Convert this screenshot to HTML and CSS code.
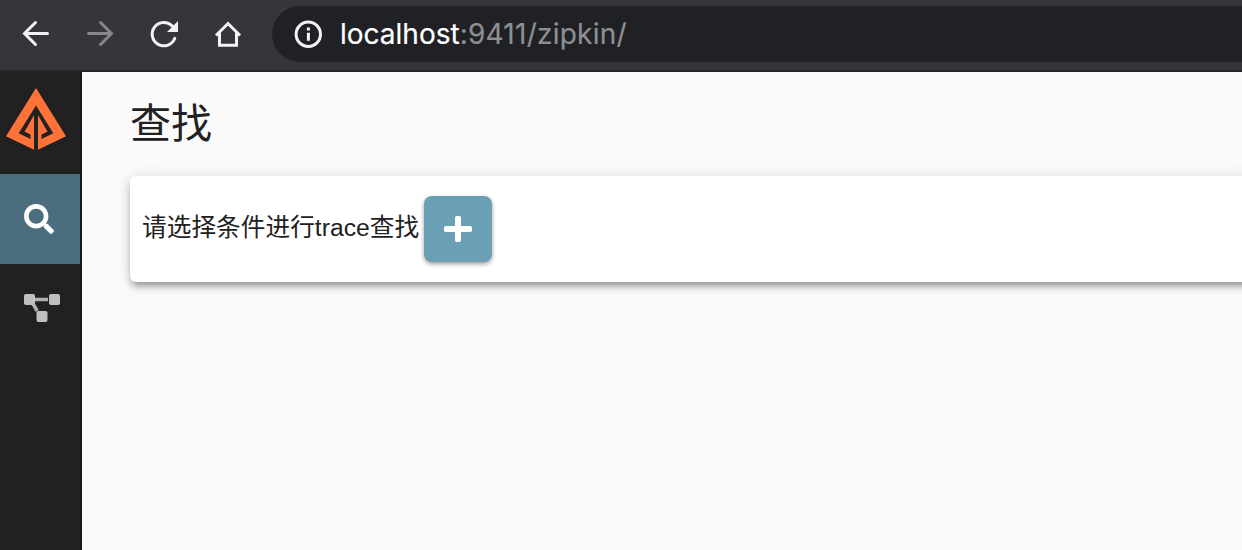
FILE: index.html
```html
<!DOCTYPE html>
<html lang="zh-CN">
<head>
<meta charset="utf-8">
<title>Zipkin</title>
<link rel="stylesheet" href="styles.css">
</head>
<body>
<header class="toolbar">
  <nav class="nav-icons">
    <svg width="32" height="32" viewBox="0 0 32 32" class="stroke"><path d="M27.500 15.500H4.500M15.500 4.500 4.500 15.500 15.500 26.500"/></svg>
    <svg width="32" height="32" viewBox="0 0 32 32" class="stroke dim"><path d="M4.500 15.500H27.500M16.500 4.500 27.500 15.500 16.500 26.500"/></svg>
    <svg width="32" height="32" viewBox="0 0 32 32" class="stroke"><path d="M26.800 20.300A11.700 11.700 0 1 1 24.200 7.900"/><path class="solid" d="M30 3V14H19Z"/></svg>
    <svg width="32" height="32" viewBox="0 0 32 32" class="stroke"><path class="miter" d="M4 17.500 16 5.500 28 17.500M7.500 14.500V27.300H24.500V14.500"/></svg>
  </nav>
  <div class="address">
    <svg width="28" height="28" viewBox="0 0 28 28" class="stroke info"><circle cx="14.300" cy="14.300" r="12.200"/><path class="solid" d="M12.900 7.500h3v3h-3zM12.900 12.700h3v8h-3z"/></svg>
    <div class="url"><span class="host">localhost</span><span class="path">:9411/zipkin/</span></div>
  </div>
</header>
<div class="app">
  <aside class="sidebar">
    <div class="logo">
      <svg width="60" height="62" viewBox="0 0 60 62"><path fill="#ff7238" fill-rule="evenodd" d="M30 0 60 48.300 32 61.800V27L41.500 43.700 35.500 46.500V51L47.300 45.200 30 17.500 12.700 45.200 24.500 51V46.500L18.500 43.700 28 27V61.800L0 48.300Z"/></svg>
    </div>
    <a class="item active">
      <svg width="30" height="30" viewBox="0 0 512 512"><path fill="#fff" d="M505 442.700 405.300 343c-4.500-4.500-10.600-7-17-7H372c27.600-35.300 44-79.700 44-128C416 93.100 322.900 0 208 0S0 93.100 0 208s93.100 208 208 208c48.300 0 92.700-16.400 128-44v16.300c0 6.400 2.500 12.500 7 17l99.700 99.700c9.400 9.400 24.600 9.400 33.900 0l28.300-28.300c9.400-9.400 9.400-24.600.1-34zM208 336c-70.700 0-128-57.200-128-128 0-70.700 57.200-128 128-128 70.700 0 128 57.200 128 128 0 70.700-57.200 128-128 128z"/></svg>
    </a>
    <a class="item deps">
      <svg width="36" height="28" viewBox="0 0 36 28"><path d="M10 5.500H24M8 8 13.200 17" stroke="#b0b0b0" stroke-width="3.500"/><g fill="#c0c0c0"><rect width="11" height="11" rx="2"/><rect x="25" width="11" height="11" rx="2"/><rect x="12.500" y="17" width="11" height="11" rx="2"/></g></svg>
    </a>
  </aside>
  <main class="content">
    <h1 class="title">查找</h1>
    <section class="card">
      <span class="prompt">请选择条件进行<span class="latin">trace</span>查找</span>
      <button class="add" aria-label="add"><svg width="28" height="26" viewBox="0 0 28 26"><g fill="#fff"><rect y="10" width="28" height="6" rx="1.800"/><rect x="11" width="6" height="26" rx="1.800"/></g></svg></button>
    </section>
  </main>
</div>
</body>
</html>
```
FILE: styles.css
```css
* { box-sizing: border-box; }
body { margin: 0; height: 550px; overflow: hidden; display: flex; flex-direction: column; background: #fafafa; color: #212121; font-family: "Liberation Sans", "Noto Sans CJK SC", sans-serif; }
svg { display: block; flex: none; }
.toolbar { height: 72px; flex: none; display: flex; background: #35363a; border-bottom: 2px solid #282627; padding: 6px 0 8px 20px; }
.nav-icons { display: flex; gap: 32px; width: 252px; flex: none; padding-top: 12px; }
.stroke { fill: none; stroke: #f1f3f4; stroke-width: 3; stroke-linecap: round; }
.dim { stroke: #86878a; }
.solid { fill: #f1f3f4; stroke: none; }
.miter { stroke-linecap: butt; }
.address { flex: 1; height: 56px; display: flex; align-items: center; background: #202124; border-radius: 28px 0 0 28px; padding-left: 22px; }
.info { margin-right: 18px; }
.url { font: 28px/56px Inter, sans-serif; white-space: nowrap; }
.host { color: #fff; -webkit-text-stroke: .2px #fff; }
.path { color: #8e8f92; letter-spacing: .25px; -webkit-text-stroke: .2px #8e8f92; }
.app { flex: 1; display: flex; min-height: 0; }
.sidebar { width: 82px; flex: none; background: #212121; border-right: 2px solid #191919; }
.logo { height: 102px; padding: 16px 0 0 6px; }
.item { height: 90px; display: flex; align-items: center; padding-left: 24px; }
.active { background: #4b6e7e; }
.deps { padding-bottom: 2px; }
.content { flex: 1; padding: 20px 0 0 48px; min-width: 0; }
.title { margin: 0 0 28px; height: 56px; font: 400 41px/56px "Noto Sans CJK SC", sans-serif; }
.card { height: 106px; margin-right: -20px; display: flex; align-items: flex-start; background: #fff; border-radius: 6px; padding: 20px 0 0 12px; box-shadow: 0 6px 6px -3px rgba(0,0,0,.28), 0 4px 10px rgba(0,0,0,.18), 0 0 20px rgba(0,0,0,.07); }
.prompt { width: 282px; font-size: 24.700px; line-height: 64px; white-space: nowrap; }
.latin { font-size: 24.700px; }
.add { width: 68px; height: 66px; padding: 0; border: 0; border-radius: 8px; background: #6b9fb5; display: flex; align-items: center; justify-content: center; box-shadow: 0 2px 4px rgba(0,0,0,.4); }
```
